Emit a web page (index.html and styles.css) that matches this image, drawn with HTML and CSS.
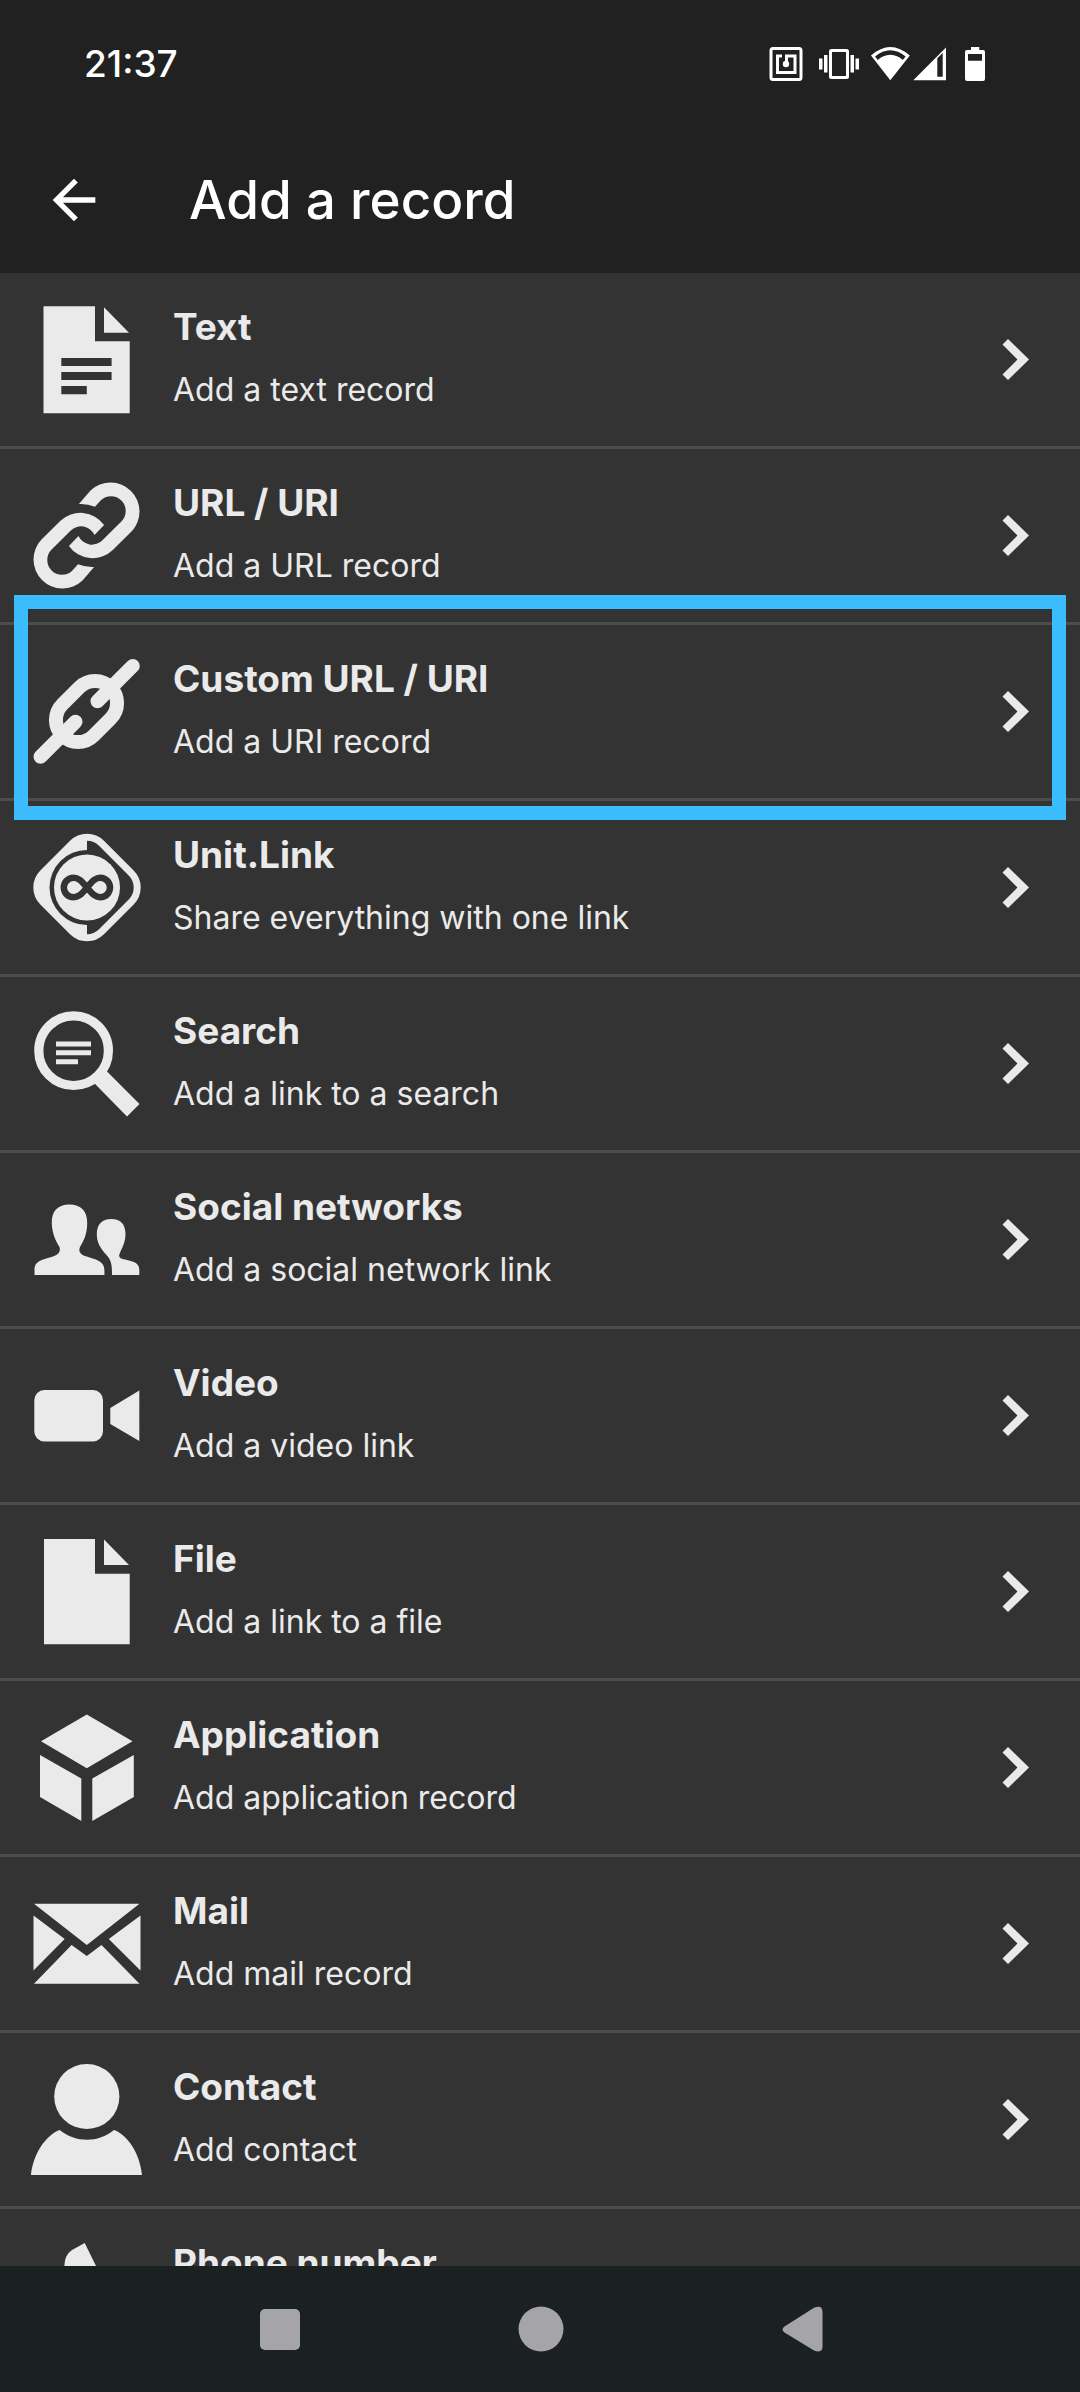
FILE: index.html
```html
<!DOCTYPE html>
<html lang="en">
<head>
<meta charset="utf-8">
<meta name="viewport" content="width=device-width, initial-scale=1">
<title>Add a record</title>
<link rel="stylesheet" href="styles.css">
</head>
<body>
<svg class="defs" aria-hidden="true">
  <symbol id="chevron" viewBox="0 0 28 43"><path d="M.5 6.500 6 1l21 20.500L6 42 .5 36.500 15.500 21.500z"/></symbol>
  <symbol id="half-link" viewBox="0 0 121 121"><path d="M52.900 29 64.500 15.500A29 29 0 0 1 105.500 56.500L86.800 75A29 29 0 0 1 42.900 71L52.500 61A14.700 14.700 0 0 0 76.700 64.900L95.400 46.400A14.700 14.700 0 0 0 74.600 25.600L69 31.700Q61 28.500 52.900 29z"/></symbol>
</svg>

<div class="status-bar">
  <time class="clock">21:37</time>
  <div class="status-icons" aria-hidden="true">
    <svg viewBox="769 46 42 34" width="42" height="34"><g fill="none" stroke="#fff" stroke-width="3"><rect x="771" y="47.500" width="30" height="31" rx="2"/><path d="M782 55h-4.500v16.500H795V55h-8.500v8"/></g><circle cx="786" cy="63" r="3.200"/></svg>
    <svg viewBox="811 46 54 34" width="54" height="34"><rect x="830.500" y="49.500" width="17" height="27" rx="1" fill="none" stroke="#fff" stroke-width="3"/><path d="M819 57.500h3.500v11H819zM824 54h3.500v17.500H824zM850.500 54h3.500v17.500h-3.500zM855.500 57.500h3.500v11h-3.500z"/></svg>
    <svg viewBox="865 46 47 34" width="47" height="34"><path fill-rule="evenodd" d="M890.300 79.200 871 54.600Q890.300 37.600 909.800 54.600zM875 55.500 877.800 59Q883 54 890.300 53.800 897.600 54 902.800 59L905.600 55.500Q890.300 43 875 55.500z"/></svg>
    <svg viewBox="912 46 44 34" width="44" height="34"><path fill-rule="evenodd" d="M913.300 79.200 946 46.500V79.200zM937.300 57.300V75.700H942.700V51.900z"/></svg>
    <svg viewBox="956 46 38 34" width="38" height="34"><path fill-rule="evenodd" d="M971 46h8.300v3H983q2 0 2 2v27q0 2-2 2H967q-2 0-2-2V51q0-2 2-2h4zM968 53v6.700h14V53z"/></svg>
  </div>
</div>

<header class="app-bar">
  <button class="back" type="button" aria-label="Back"><svg viewBox="0 0 24 24"><path d="M20 11H7.830l5.590-5.590L12 4l-8 8 8 8 1.410-1.410L7.830 13H20z"/></svg></button>
  <h1>Add a record</h1>
</header>

<main class="records">
  <ul>
    <li><a class="record" href="#text">
      <svg class="icon" viewBox="0 0 121 121"><path fill-rule="evenodd" d="M17.500 7.300H69V42.300h34.700v72H17.500zM35.300 59v8h50.300v-8zM35.300 73v8h50.300v-8zM35.300 87v8.300h25.500V87z"/><path d="M78 8.300 103 33.700H78z"/></svg>
      <span class="label"><strong>Text</strong><span>Add a text record</span></span>
      <svg class="chevron"><use href="#chevron"/></svg></a></li>
    <li><a class="record" href="#url">
      <svg class="icon" viewBox="0 0 121 121"><use href="#half-link"/><use href="#half-link" transform="rotate(180 60.500 60.500)"/></svg>
      <span class="label"><strong>URL / URI</strong><span>Add a URL record</span></span>
      <svg class="chevron"><use href="#chevron"/></svg></a></li>
    <li class="highlighted"><a class="record" href="#custom-url">
      <svg class="icon" viewBox="0 0 121 121"><g fill="none" stroke="#eaeaea" stroke-width="14"><path d="M53.400 36.400A22 22 0 0 1 84.600 67.600L67.600 84.600A22 22 0 0 1 36.400 53.400z"/><path stroke-linecap="round" d="M71.500 50.200 106.800 14.900M49.500 70.800 14.500 105.800"/></g></svg>
      <span class="label"><strong>Custom URL / URI</strong><span>Add a URI record</span></span>
      <svg class="chevron"><use href="#chevron"/></svg></a></li>
    <li><a class="record" href="#unit-link">
      <svg class="icon" viewBox="0 0 121 121"><rect x="19.500" y="19" width="83" height="83" rx="20.500" transform="rotate(45 61 60.500)" fill="none" stroke="#eaeaea" stroke-width="7"/><path fill-rule="evenodd" d="M61 9.500Q51 9 44.500 15.500L16 44Q1 60.500 16 77L44.500 105.500Q51 112 61 111.500V98A37.500 37.500 0 0 1 61 23z"/><circle cx="61" cy="60.500" r="33"/><path fill="none" stroke="#333" stroke-width="6.500" d="M61 60.500C55 53 52 50.800 47.500 50.800a9.700 9.700 0 0 0 0 19.400C52 70.200 55 68 61 60.500S70 50.800 74.300 50.800a9.700 9.700 0 0 1 0 19.400C70 70.200 67 68 61 60.500z"/></svg>
      <span class="label"><strong>Unit.Link</strong><span>Share everything with one link</span></span>
      <svg class="chevron"><use href="#chevron"/></svg></a></li>
    <li><a class="record" href="#search">
      <svg class="icon" viewBox="0 0 121 121"><circle cx="47.600" cy="47.700" r="34.800" fill="none" stroke="#eaeaea" stroke-width="9.200"/><path d="M74 66 78 66 81.300 68.700 113.500 101 101 113.500 69.100 81 67 77zM30 38.500h35v5H30zM30 47.300h35v5H30zM30 56.200h22v5H30z"/></svg>
      <span class="label"><strong>Search</strong><span>Add a link to a search</span></span>
      <svg class="chevron"><use href="#chevron"/></svg></a></li>
    <li><a class="record" href="#social">
      <svg class="icon" viewBox="0 0 121 121"><path d="M43.400 25.500C55 25.500 61.200 32 61.200 44 61.200 56 57 63 54 68 52 73 55 75.500 59 77 70 80.500 78.400 82 78.400 91V96H8.500V91C8.500 81 18 80.500 27 77.500 32 75.500 35 73 33.500 68 30 62 26 55 25.800 44 25.500 32 32 25.500 43.400 25.500z"/><path d="M85.100 40C95 40 99.500 45.500 99.500 55 99.500 64 95.500 69.500 93.500 75 92 79 96 80 101 81 109 83 113.300 84.500 113.300 91V96H86C86 87 85.500 81 80.500 76 75 70 70.800 64 70.800 55 70.800 45.500 76 40 85.100 40z"/></svg>
      <span class="label"><strong>Social networks</strong><span>Add a social network link</span></span>
      <svg class="chevron"><use href="#chevron"/></svg></a></li>
    <li><a class="record" href="#video">
      <svg class="icon" viewBox="0 0 121 121"><rect x="8.300" y="35" width="68.700" height="51.500" rx="10"/><path d="M84.300 53 113.300 35.500V86L84.300 69z"/></svg>
      <span class="label"><strong>Video</strong><span>Add a video link</span></span>
      <svg class="chevron"><use href="#chevron"/></svg></a></li>
    <li><a class="record" href="#file">
      <svg class="icon" viewBox="0 0 121 121"><path d="M18 8H69V42.700h34.700v70.600H18z"/><path d="M78 8.500 103 34H78z"/></svg>
      <span class="label"><strong>File</strong><span>Add a link to a file</span></span>
      <svg class="chevron"><use href="#chevron"/></svg></a></li>
    <li><a class="record" href="#application">
      <svg class="icon" viewBox="0 0 121 121"><path d="M60.800 7.500 106.500 34.300 60.800 61.300 15 34.300zM14 48 55.300 71.500V114L14 90zM66.300 71.500 107.800 48V90L66.300 114z"/></svg>
      <span class="label"><strong>Application</strong><span>Add application record</span></span>
      <svg class="chevron"><use href="#chevron"/></svg></a></li>
    <li><a class="record" href="#mail">
      <svg class="icon" viewBox="0 0 121 121"><path d="M8 20.800H113.500L60.800 62zM7.500 32.500 38.700 56 7.500 87.500zM114.500 32.500 82.800 56 114.500 87.500zM45.600 62 60.800 73 75.500 62 113.500 100.800H8z"/></svg>
      <span class="label"><strong>Mail</strong><span>Add mail record</span></span>
      <svg class="chevron"><use href="#chevron"/></svg></a></li>
    <li><a class="record" href="#contact">
      <svg class="icon" viewBox="0 0 121 121"><circle cx="60.800" cy="37.500" r="32.600"/><path d="M5 116C7 95 20 76 33.600 71 50 84 72 84 88 71 102 76 114 95 116 116z"/></svg>
      <span class="label"><strong>Contact</strong><span>Add contact</span></span>
      <svg class="chevron"><use href="#chevron"/></svg></a></li>
    <li><a class="record" href="#phone">
      <svg class="icon" viewBox="0 0 121 121"><path d="M58.700 8 46 15Q38.500 20 38.400 31C38 64 52 95 76 110Q84 115 91 110L100 103 82 77 72 82C63 72 58 58 60 44L71 33z"/></svg>
      <span class="label"><strong>Phone number</strong><span>Add phone number</span></span>
      <svg class="chevron"><use href="#chevron"/></svg></a></li>
  </ul>
</main>

<nav class="system-nav" aria-label="System">
  <button type="button" aria-label="Recent apps"><svg viewBox="0 0 60 60"><rect x="10" y="10" width="40" height="41" rx="5"/></svg></button>
  <button type="button" aria-label="Home"><svg viewBox="0 0 60 60"><circle cx="30" cy="30" r="22.500"/></svg></button>
  <button type="button" aria-label="Back"><svg viewBox="0 0 60 60"><path d="M12.500 27.500 42 8.800Q50.500 5.500 50.500 13V47.500Q50.500 54.500 42 51.500L12.500 33.500Q8.500 30.500 12.500 27.500z"/></svg></button>
</nav>
</body>
</html>
```
FILE: styles.css
```css
* {
  box-sizing: border-box;
}

body {
  display: flex;
  flex-direction: column;
  height: 100vh;
  margin: 0;
  background: #212121;
  color: #fff;
  font-family: Inter, Roboto, sans-serif;
}

.defs {
  position: absolute;
  width: 0;
  height: 0;
}

svg {
  display: block;
  flex: none;
}

button {
  margin: 0;
  padding: 0;
  border: 0;
  background: none;
}

.status-bar {
  display: flex;
  flex: none;
  align-items: center;
  justify-content: space-between;
  height: 127px;
  padding: 0 86px 0 84px;
}

.clock {
  font-size: 37px;
  font-weight: 500;
}

.status-icons {
  display: flex;
  fill: #fff;
}

.app-bar {
  display: flex;
  flex: none;
  align-items: center;
  gap: 83px;
  height: 146px;
  padding: 0 42px;
}

.back svg {
  width: 64px;
  height: 64px;
  fill: #fff;
}

h1 {
  margin: 0;
  font-size: 53px;
  font-weight: 500;
}

.records {
  flex: 1;
  min-height: 0;
  overflow-y: auto;
  scrollbar-width: none;
  background: #333;
  color: #eaeaea;
}

.records ul {
  margin: 0;
  padding: 0;
  list-style: none;
}

.records li {
  position: relative;
  border-bottom: 3px solid #4d4d4d;
}

.record {
  display: flex;
  align-items: center;
  gap: 26px;
  min-height: 173px;
  padding: 0 50px 0 26px;
  color: inherit;
  text-decoration: none;
}

.icon {
  width: 121px;
  height: 121px;
  fill: #eaeaea;
}

.label {
  display: flex;
  flex: 1;
  flex-direction: column;
  gap: 12px;
  font-size: 32px;
  line-height: 54px;
}

.label strong {
  font-size: 37px;
  font-weight: 700;
  line-height: 48px;
}

.chevron {
  width: 28px;
  height: 43px;
  fill: #eaeaea;
}

.highlighted::after {
  content: "";
  position: absolute;
  z-index: 1;
  top: -30px;
  right: 14px;
  bottom: -22px;
  left: 14px;
  border: 14px solid #3cbcfc;
  pointer-events: none;
}

.system-nav {
  display: flex;
  flex: none;
  align-items: center;
  justify-content: center;
  gap: 201px;
  height: 126px;
  padding-left: 2px;
  background: #1b2021;
}

.system-nav svg {
  width: 60px;
  height: 60px;
  fill: #a5a5a7;
}
```
